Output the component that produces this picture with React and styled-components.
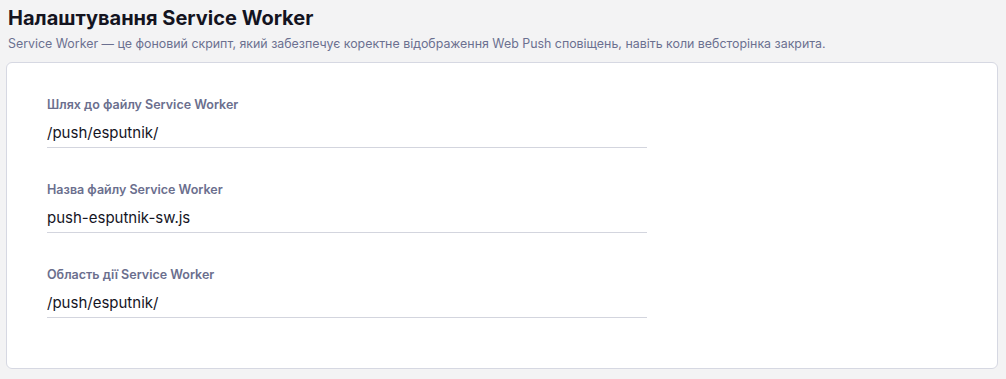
import React from "react";
import styled, { createGlobalStyle } from "styled-components";

const GlobalStyle = createGlobalStyle`
    html, body {
        margin: 0;
        padding: 0;
        background: #f3f3f4;
        font-family: "Inter", "Roboto", "Noto Sans", sans-serif;
    }
`;

const StyledPage = styled.div`
    padding: 5px 8px 0 6px;
`;

const StyledHeader = styled.div`
    padding: 0 2px;
    margin-bottom: 10px;
`;

const StyledTitle = styled.h1`
    margin: 0;
    font-size: 20px;
    line-height: 26px;
    font-weight: 700;
    color: #14141f;
`;

const StyledSubtitle = styled.p`
    margin: 5px 0 0;
    font-size: 12.4px;
    line-height: 16px;
    color: #6b7090;
`;

const StyledCard = styled.div`
    background: #fff;
    border: 1px solid #d6d8e2;
    border-radius: 6px;
    padding: 34px 40px 35px;
    display: flex;
    flex-direction: column;
    gap: 34px;
    height: 307px;
    box-sizing: border-box;
`;

const StyledField = styled.div`
    display: flex;
    flex-direction: column;
    width: 600px;
`;

const StyledLabel = styled.label`
    font-size: 12.5px;
    line-height: 16px;
    font-weight: 600;
    color: #6b6f8e;
    margin-bottom: 6px;
`;

const StyledInput = styled.input`
    border: none;
    border-bottom: 1px solid #d3d5de;
    padding: 4px 0 4px;
    font-family: inherit;
    font-size: 15px;
    line-height: 20px;
    color: #15151f;
    background: transparent;
    outline: none;
`;

const fields = [
    { label: "Шлях до файлу Service Worker", value: "/push/esputnik/" },
    { label: "Назва файлу Service Worker", value: "push-esputnik-sw.js" },
    { label: "Область дії Service Worker", value: "/push/esputnik/" },
];

const App = () => {
    return (
        <>
            <GlobalStyle />
            <StyledPage>
                <StyledHeader>
                    <StyledTitle>Налаштування Service Worker</StyledTitle>
                    <StyledSubtitle>
                        Service Worker — це фоновий скрипт, який забезпечує
                        коректне відображення Web Push сповіщень, навіть коли
                        вебсторінка закрита.
                    </StyledSubtitle>
                </StyledHeader>
                <StyledCard>
                    {fields.map((field) => (
                        <StyledField key={field.label}>
                            <StyledLabel>{field.label}</StyledLabel>
                            <StyledInput
                                type="text"
                                defaultValue={field.value}
                            />
                        </StyledField>
                    ))}
                </StyledCard>
            </StyledPage>
        </>
    );
};

export default App;
